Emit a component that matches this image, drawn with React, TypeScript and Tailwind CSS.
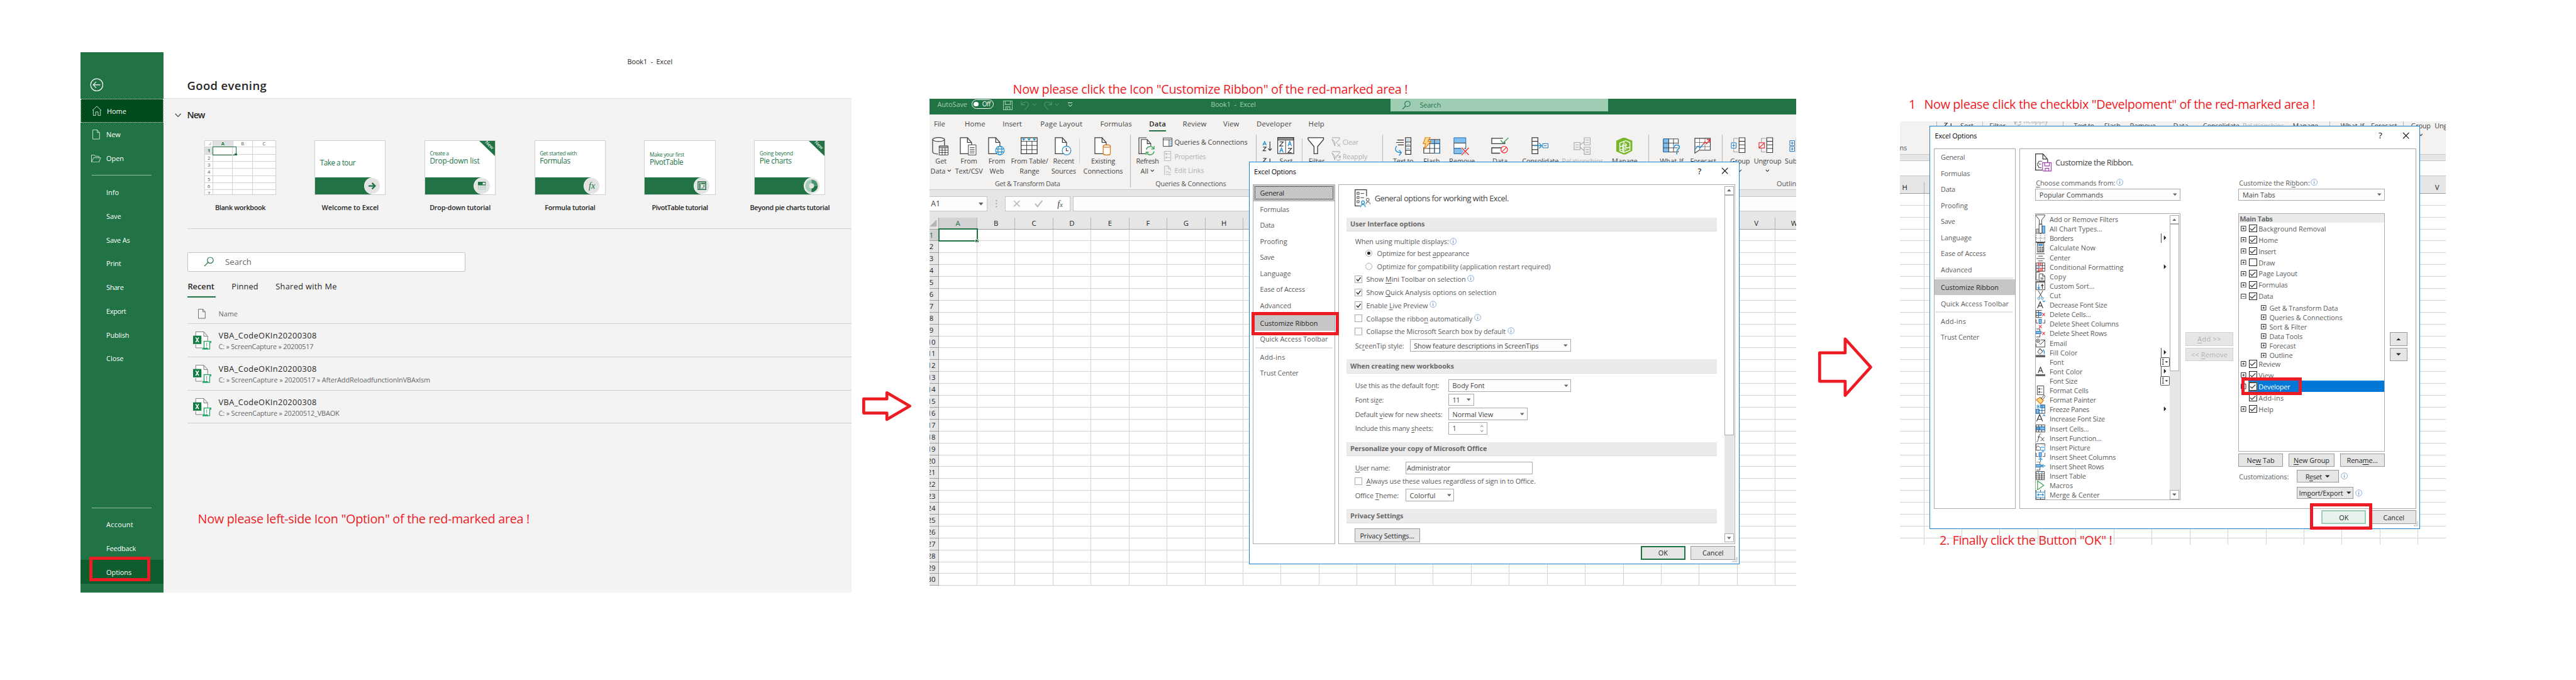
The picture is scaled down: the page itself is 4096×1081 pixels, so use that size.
import React, { useLayoutEffect, useRef, useState } from "react";

/* ---------- text ---------- */

/** Text run spread to the width `w`; "~" underlines the next letter. */
function T({ t, w, c = "" }: { t: string; w?: number; c?: string }) {
  const ref = useRef<HTMLSpanElement>(null);
  const [ls, setLs] = useState<number | undefined>(undefined);
  const plain = t.replace("~", "");
  useLayoutEffect(() => {
    if (w && ref.current && ls === undefined) {
      setLs((w - ref.current.offsetWidth) / plain.length);
    }
  }, [w, ls, plain]);
  const k = t.indexOf("~");
  return (
    <span
      ref={ref}
      className={"inline-block shrink-0 whitespace-pre " + c}
      style={ls === undefined ? undefined : { letterSpacing: ls + "px" }}
    >
      {k < 0 ? (
        t
      ) : (
        <>
          {t.slice(0, k)}
          <span className="underline underline-offset-2">{t[k + 1]}</span>
          {t.slice(k + 2)}
        </>
      )}
    </span>
  );
}

function Svg({ w, h, c = "", children }: { w: number; h: number; c?: string; children: React.ReactNode }) {
  return (
    <svg width={w} height={h} viewBox={`0 0 ${w} ${h}`} fill="none" className={"shrink-0 " + c}>
      {children}
    </svg>
  );
}

const K = "#3b3a39";
const B = "#1e8bcd";
const LB = "#83beec";
const R = "#e8383d";
const G = "#3fa158";
const O = "#e07b1a";

/* ---------- backstage ---------- */

const doc = (
  <Svg w={13} h={17}>
    <path d="M.5.5h7.5l4 4.5v11H.5zM8 .5V5h4" stroke="currentColor" />
  </Svg>
);

function SideItem({ t, w, icon, c = "" }: { t: string; w: number; icon?: React.ReactNode; c?: string }) {
  return (
    <div className={"flex h-[40px] items-center pt-[1px] " + c}>
      <div className="flex w-[43px] justify-center pl-[9px]">{icon}</div>
      <T t={t} w={w} />
    </div>
  );
}

function Ribbonlet() {
  return (
    <div className="absolute right-0 top-0 h-[26px] w-[27px]">
      <Svg w={27} h={26}>
        <path d="M0 0h27v26z" fill="#217346" />
      </Svg>
      <span className="absolute left-[9px] top-[1px] rotate-45 text-[8px] leading-[12px] text-white">New</span>
    </div>
  );
}

function Tile({ small, big, cap, w, isNew, badge, sw, bw }: any) {
  return (
    <div className="flex w-[185px] flex-col items-center">
      <div className="relative h-[92px] w-[120px] overflow-hidden border border-[#d0d0d0] bg-white text-[#217346]">
        <div className={"flex flex-col items-start pl-[8px] " + (small ? (big === "PivotTable" ? "pt-[18px]" : "pt-[16px]") : "pt-[30px]")}>
          {small && <T t={small} w={sw} c="text-[9px] leading-[11px]" />}
          <T t={big} w={bw} c="text-[12.500px] leading-[13px]" />
        </div>
        <div className="absolute bottom-0 left-0 h-[28px] w-[95px] bg-[#217346]" />
        <div className="absolute bottom-0 right-[8px] flex h-[28px] w-[28px] items-center justify-center rounded-full border-2 border-white bg-[#e3e3e3]">
          {badge}
        </div>
        {isNew && <Ribbonlet />}
      </div>
      <T t={cap} w={w} c="mt-[12px] font-semibold leading-[18px] text-[#262626]" />
    </div>
  );
}

function BlankTile() {
  return (
    <div className="flex w-[185px] flex-col items-center">
      <div className="h-[92px] w-[120px] overflow-hidden border border-[#d0d0d0] bg-white text-[8px] text-[#555]">
        <div className="flex h-[11px] leading-[10px]">
          <div className="flex w-[15px] items-end justify-end border-b border-r border-[#d4d4d4] p-[2px]">
            <Svg w={7} h={7}><path d="M7 0v7H0z" fill="#d4d4d4" /></Svg>
          </div>
          <div className="w-[38px] border-r border-[#d4d4d4] bg-[#e0e0e0] text-center font-bold text-[#217346]">A</div>
          <div className="w-[38px] border-b border-r border-[#d4d4d4] text-center">B</div>
          <div className="w-[38px] shrink-0 border-b border-[#d4d4d4] text-center">C</div>
        </div>
        {[1, 2, 3, 4, 5, 6, 7].map((n) => (
          <div key={n} className="flex h-[12px] leading-[12px]">
            <div className={"w-[15px] border-b border-r border-[#d4d4d4] text-center " + (n === 1 ? "bg-[#e0e0e0] font-bold text-[#217346]" : "")}>{n}</div>
            <div className="relative w-[38px] border-b border-r border-[#d4d4d4]">
              {n === 1 && (
                <div className="absolute -left-[1px] -top-[1px] h-[14px] w-[40px] border-[1.5px] border-[#217346]">
                  <div className="absolute -bottom-[2px] -right-[2px] h-[4px] w-[4px] bg-[#217346]" />
                </div>
              )}
            </div>
            <div className="w-[38px] border-b border-r border-[#d4d4d4]" />
            <div className="w-[38px] shrink-0 border-b border-[#d4d4d4]" />
          </div>
        ))}
      </div>
      <T t="Blank workbook" w={85} c="mt-[12px] font-semibold leading-[18px] text-[#262626]" />
    </div>
  );
}

function FileRow({ sub, w }: { sub: string; w: number }) {
  return (
    <div className="flex h-[56px] border-b border-[#d0d0d0] pl-[10px] pt-[13px]">
      <Svg w={31} h={31}>
        <path d="M4.500 8V.5h13.500l6.500 7.500v8M18 .5V8h6.500M4.500 22v5.500H15" stroke="#777" fill="#fff" />
        <rect x="0" y="7" width="14" height="14" fill="#107c41" />
        <path d="M4.500 10l5 8M9.500 10l-5 8" stroke="#fff" strokeWidth="1.700" />
        <path d="M18.500 28V16.500h11.500v2h-2V29.500H16.500v-1.500z" stroke="#21a366" strokeWidth="1.400" fill="#fff" />
        <path d="M16 27.500h9v2.500h-9z" fill="#21a366" />
        <path d="M23 19v6M23 26v1.500" stroke="#777" />
      </Svg>
      <div className="-mt-[2px] flex flex-col items-start pl-[12px]">
        <T t="VBA_CodeOKIn20200308" w={165} c="text-[13.500px] leading-[19px] text-[#262626]" />
        <T t={sub} w={w} c="text-[11.500px] leading-[17px] text-[#666]" />
      </div>
    </div>
  );
}

function Backstage() {
  return (
    <section className="mt-[88px] flex h-[909px] w-[1297px] bg-[#f3f3f3]">
      <aside className="flex w-[139px] flex-col bg-[#217346] text-white">
        <div className="h-[78px] pl-[15px] pt-[43px]">
          <Svg w={23} h={23}>
            <circle cx="11.500" cy="11.500" r="10.300" stroke="#fff" strokeWidth="1.300" />
            <path d="M17.500 11.500h-12M10.500 6.500l-5 5 5 5" stroke="#fff" strokeWidth="1.200" />
          </Svg>
        </div>
        <SideItem
          t="Home"
          w={33}
          c="border border-dotted border-white bg-[#004b1c]"
          icon={<Svg w={17} h={17}><path d="M1 8L8.500 1 16 8M2.500 7v9.500h4v-6h4v6h4V7" stroke="#cfe3d7" /></Svg>}
        />
        <SideItem t="New" w={24} icon={<span className="text-[#cfe3d7]">{doc}</span>} />
        <SideItem
          t="Open"
          w={29}
          icon={<Svg w={17} h={13}><path d="M.5 12V.5h5l1.500 2h6V5M.5 12.500L4 5h12l-3 7.500z" stroke="#cfe3d7" /></Svg>}
        />
        <div className="mx-[19px] mb-[8px] mt-[8px] h-[1px] w-[100px] bg-[#90b9a2]" />
        <SideItem t="Info" w={21} />
        <SideItem t="Save" w={25} />
        <SideItem t="Save As" w={40} />
        <SideItem t="Print" w={25} />
        <SideItem t="Share" w={29} />
        <SideItem t="Export" w={33} />
        <SideItem t="Publish" w={38} />
        <SideItem t="Close" w={29} />
        <div className="mb-[7px] ml-[19px] mt-auto h-[1px] w-[100px] bg-[#90b9a2]" />
        <SideItem t="Account" w={45} />
        <SideItem t="Feedback" w={50} />
        <SideItem t="Options" w={42} c="bg-[#0f5c2f]" />
        <div className="h-[15px]" />
      </aside>

      <main className="flex flex-1 flex-col text-[#262626]">
        <div className="h-[78px] border-b border-[#e1e1e1] bg-white">
          <div className="flex h-[30px] items-center pl-[781px]"><T t="Book1  -  Excel" w={76} /></div>
          <div className="-mt-[1px] flex h-[54px] items-center pl-[40px]">
            <T t="Good evening" w={134} c="text-[19.500px] font-semibold" />
          </div>
        </div>
        <div className="flex h-[70px] items-start pl-[19px] pt-[17px]">
          <Svg w={11} h={7} c="mt-[8px]"><path d="M.8.8l4.700 5 4.700-5" stroke="#444" strokeWidth="1.200" /></Svg>
          <T t="New" w={30} c="ml-[10px] text-[15px] font-semibold leading-[22px]" />
        </div>
        <div className="flex h-[148px] pl-[37px]">
          <BlankTile />
          <Tile big="Take a tour" bw={60} cap="Welcome to Excel" w={96}
            badge={<Svg w={14} h={14}><path d="M1 7h11M7 2l5 5-5 5" stroke="#217346" strokeWidth="2.500" /></Svg>} />
          <Tile small="Create a" sw={32} big="Drop-down list" bw={84} cap="Drop-down tutorial" w={103} isNew
            badge={<Svg w={13} h={13}><path d="M0 0h13v6H0z" fill="#217346" /><path d="M8 1.500h4v3H8z" fill="#fff" /><path d="M.5 6.500h12v6H.5zM2 9.500h9" stroke="#a9ccb8" /></Svg>} />
          <Tile small="Get started with" sw={62} big="Formulas" bw={51} cap="Formula tutorial" w={85}
            badge={<span className="font-['Liberation_Serif',serif] text-[15px] italic leading-none">fx</span>} />
          <Tile small="Make your first" sw={58} big="PivotTable" bw={57} cap="PivotTable tutorial" w={95}
            badge={<Svg w={15} h={15}><path d="M1 1h13v13H1z" stroke="#217346" strokeWidth="1.500" /><path d="M3 3h2v10H3zM6 3h7v2H6z" fill="#217346" /><path d="M7 12c3 0 4-2 4-4M9.500 8.500L11 7l1.500 1.500" stroke="#217346" /></Svg>} />
          <Tile small="Going beyond" sw={56} big="Pie charts" bw={54} cap="Beyond pie charts tutorial" w={134} isNew
            badge={<Svg w={22} h={22}><circle cx="11" cy="11" r="7.500" stroke="#a5cab5" strokeWidth="6" /><path d="M18.500 11a7.500 7.500 0 0 1-7.500 7.500" stroke="#217346" strokeWidth="6" /><path d="M11 3.500a7.500 7.500 0 0 1 7.500 7.500" stroke="#4f9470" strokeWidth="6" /></Svg>} />
        </div>
        <div className="ml-[40px] h-[1px] bg-[#d0d0d0]" />
        <div className="ml-[40px] mt-[40px] flex h-[32px] w-[468px] items-center rounded-[2px] border border-[#c3c3c3] bg-white pl-[27px]">
          <Svg w={17} h={17}><circle cx="11" cy="6" r="5" stroke="#217346" strokeWidth="1.200" /><path d="M7.500 9.500L1 16" stroke="#217346" strokeWidth="1.300" /></Svg>
          <T t="Search" w={44} c="ml-[19px] text-[14px] text-[#666]" />
        </div>
        <div className="ml-[40px] mt-[14px] flex h-[30px] items-start text-[13.500px]">
          <div className="h-[30px] w-[48px] border-b-[3px] border-[#217346] pt-[3px]"><T t="Recent" w={46} c="pl-[1px] font-semibold" /></div>
          <T t="Pinned" w={45} c="ml-[27px] pt-[3px]" />
          <T t="Shared with Me" w={103} c="ml-[29px] pt-[3px]" />
        </div>
        <div className="ml-[40px] flex h-[44px] items-center border-b border-[#d0d0d0] pl-[18px] pt-[11px] text-[#666]">
          {doc}
          <T t="Name" w={32} c="ml-[22px]" />
        </div>
        <div className="ml-[40px]">
          <FileRow sub="C: » ScreenCapture » 20200517" w={160} />
          <FileRow sub="C: » ScreenCapture » 20200517 » AfterAddReloadfunctionInVBAxlsm" w={356} />
          <FileRow sub="C: » ScreenCapture » 20200512_VBAOK" w={203} />
        </div>
      </main>
    </section>
  );
}

/* ---------- workbook window ---------- */

const page = <path d="M1 1h12l7 8v19H1zM13 1v8h7" stroke={K} strokeWidth="1.300" fill="#fff" />;

const chev = <Svg w={7} h={5}><path d="M.8.8l2.700 3 2.700-3" stroke={K} strokeWidth="1.200" /></Svg>;

const big: Record<string, React.ReactNode> = {
  get: (
    <>
      <path d="M1 4v21c0 2 5 3.500 9 3.500M21 4v10" stroke={K} strokeWidth="1.300" />
      <ellipse cx="11" cy="4" rx="10" ry="3.300" stroke={K} strokeWidth="1.300" fill="#fff" />
      <path d="M12 15h15v15H12z" fill="#fff" stroke={K} /><path d="M12 15h15v3H12z" fill="#bbb" stroke={K} />
      <path d="M12 22h15M12 26h15M17 18v12M22 18v12" stroke={K} />
    </>
  ),
  csv: <>{page}<path d="M14.500 13h13v17h-13z" fill="#fff" stroke={K} /><path d="M17 17.500h8M17 20.500h8M17 23.500h8M17 26.500h8" stroke={K} /></>,
  web: <>{page}<g stroke={B} strokeWidth="1.200"><circle cx="20" cy="22.500" r="7.300" fill="#f3f2f1" /><ellipse cx="20" cy="22.500" rx="3.300" ry="7.300" /><path d="M13 20h14M13 25h14" /></g></>,
  table: <><path d="M.7 1h27v27H.7z" fill="#fff" stroke={K} strokeWidth="1.300" /><path d="M.7 7h27M.7 14h27M.7 21h27M10 7v21M19 7v21" stroke={K} /><path d="M2 2.500h6l-3 3.500zM11 2.500h6l-3 3.500zM20 2.500h6l-3 3.500z" fill={B} /></>,
  recent: <>{page}<circle cx="20" cy="22.500" r="7.300" stroke={B} strokeWidth="1.300" fill="#fff" /><path d="M19.500 18v5h4" stroke={K} strokeWidth="1.200" /></>,
  exist: <>{page}<path d="M15 15v13c0 1 3 2 6 2s6-1 6-2V15" fill="#fff" stroke={O} strokeWidth="1.400" /><ellipse cx="21" cy="15" rx="6" ry="2" fill="#fff" stroke={O} strokeWidth="1.400" /></>,
  refresh: <><path d="M4 28H1V1h13" stroke={K} strokeWidth="1.200" /><path d="M12 28H5V4h10l6 7v4M15 4v7h6" fill="#fff" stroke={K} strokeWidth="1.200" /><circle cx="20" cy="22.500" r="8" fill="#f3f2f1" /><path d="M13.500 21a6.500 6.500 0 0 1 12-2M26.500 24a6.500 6.500 0 0 1-12 2.500M26.500 15v5h-5M13 30v-4.500h4.500" stroke={G} strokeWidth="1.500" /></>,
  sort: <><path d="M.7.700h27v27H.7z" fill="#fff" stroke={K} strokeWidth="1.300" /><path d="M1 1h26v4H1z" fill="#999" stroke={K} /><path d="M14 5v22" stroke={K} /><path d="M4 8h6l-6 7h6M18 19h6l-6 7h6" stroke={K} strokeWidth="1.300" /><path d="M4 26l3-8 3 8M5 23h4M18 15l3-8 3 8M19 12h4" stroke={B} strokeWidth="1.300" /></>,
  filter: <path d="M1 1h26v3L17 16v12h-6V16L1 4z" fill="#fff" stroke={K} strokeWidth="1.400" />,
  textto: <><path d="M19 1h9v28h-9zM19 8h9M19 15h9M19 22h9" fill="#fff" stroke={K} strokeWidth="1.300" /><path d="M21 5h5M21 12h5M21 19h5" stroke={B} /><path d="M5 5h11M3 9h13M6 13h10" stroke={K} strokeWidth="1.300" /><path d="M4 15c-4 5-2 11 7 11M8 22l4 4-4 5" stroke={B} strokeWidth="1.400" /></>,
  flash: <><path d="M7 4h22v23H2V17" fill="#fff" stroke={K} strokeWidth="1.300" /><path d="M12 5h17v6H12z" fill={LB} /><path d="M8 11h21M2 19h27M12 11v16M20 4v23" stroke={K} /><path d="M20 11h9v16h-9z" stroke="#1567b0" /><path d="M5 0h8l-4 7h5L3 20l2-9H1z" fill="#fbd88a" stroke={O} strokeWidth="1.300" /></>,
  remove: <><path d="M2 1h20v9H2z" fill={LB} stroke="#1567b0" /><path d="M2 10h20v9H2z" fill="#fff" stroke={K} /><path d="M2 19h20v9H2z" fill={LB} stroke="#1567b0" /><path d="M15 17l12 14M27 17L15 31" stroke="#f3f2f1" strokeWidth="4" /><path d="M15 18l12 12M27 18L15 30" stroke={R} strokeWidth="1.500" /></>,
  datav: <><path d="M20 2H1v9h22V8M20 18H1v9h14" stroke={K} strokeWidth="1.400" fill="#fff" /><path d="M16 5l4 5 9-9" stroke={G} strokeWidth="1.500" /><circle cx="22" cy="21" r="5.500" stroke={R} strokeWidth="1.400" fill="#fff" /><path d="M18 25l8-8" stroke={R} strokeWidth="1.400" /></>,
  consol: <><path d="M1 1h10v27H1zM1 7h10M1 14h10M1 21h10" fill="#fff" stroke={K} strokeWidth="1.300" /><path d="M4 14.500h13M13 10l4.500 4.500L13 19" stroke={B} strokeWidth="1.400" /><path d="M19 11h9v7h-9zM21 14.500h5" fill="#fff" stroke="#1567b0" /></>,
  rel: <g stroke="#aaa" strokeWidth="1.200"><path d="M1 9h10v12H1zM3 13h6M3 17h6M18 1h10v12H18zM20 5h6M20 9h6M18 17h10v12H18zM20 21h6M20 25h6M11 13l7-5M11 17l7 6" /></g>,
  manage: <><path d="M1 6l11-5h4l12 5v17l-11 6h-4L1 24z" fill="#76b82a" /><path d="M7 10l10-4 7 3v13l-10 4-7-3zM12 12v12M17 10v12M7 16l12-3M7 21l17-4M14 8v17" stroke="#fff" strokeWidth="1.500" /></>,
  whatif: <><path d="M1 3h25v22H1z" fill="#fff" stroke={K} /><path d="M1 3h9v22H1z" fill={LB} stroke="#1567b0" /><path d="M1 10h25M1 18h25M10 3v22M18 3v22" stroke={K} /><path d="M19 17c0-5 9-5 9 0 0 3-4.500 3-4.500 7" stroke="#f3f2f1" strokeWidth="4" /><path d="M19 17c0-5 9-5 9 0 0 3-4.500 3-4.500 7M23.500 26v3" stroke={B} strokeWidth="1.600" /></>,
  forecast: <><path d="M1 2h26v20H8l-7 5z" fill="#fff" stroke={K} strokeWidth="1.200" /><path d="M1 9h26M1 16h26M9 2v20M18 2v20" stroke="#777" /><path d="M1 21l5-6 4 3 4-5" stroke={B} strokeWidth="1.500" /><path d="M14 13l4-5 3 3 5-7M26 9V4h-5" stroke={R} strokeWidth="1.500" /></>,
  group: <><path d="M14 1h10v25H14zM14 7h10M14 13h10M14 19h10" fill="#fff" stroke={K} strokeWidth="1.200" /><path d="M12 2H5v7M12 25H5v-6" stroke="#999" /><path d="M1 9.500h8v9H1zM5 11v6M2.500 14h5" stroke="#1567b0" fill="#fff" /></>,
  ungroup: <><path d="M14 1h10v25H14zM14 7h10M14 13h10M14 19h10" fill="#fff" stroke={K} strokeWidth="1.200" /><path d="M12 2H5v7M12 25H5v-6" stroke="#999" /><path d="M1 9.500h9v9H1zM1 18l9-8" stroke={R} fill="#fff" strokeWidth="1.300" /></>,
  subtotal: <><path d="M12 1h12v25H12z" fill="#fff" stroke={K} /><path d="M1 6h8v8H1zM5 7.500v5M2.500 10h5M1 16h8v8H1zM5 17.500v5M2.500 20h5" stroke="#1567b0" fill="#fff" /></>,
};

function Big({ i, a, b, aw, bw, w, d, dim }: { i: string; a: string; b?: string; aw?: number; bw?: number; w: string; d?: boolean; dim?: boolean }) {
  return (
    <div className={"flex shrink-0 flex-col items-center " + w + (dim ? " text-[#b1b1b1]" : "")}>
      <Svg w={30} h={32}>{big[i]}</Svg>
      <T t={a} w={aw} c="leading-[16px]" />
      <div className="flex h-[16px] items-center gap-[3px]">
        {b && <T t={b} w={bw} c="leading-[16px]" />}
        {d && chev}
      </div>
    </div>
  );
}

function Group({ w, label, lw, children, c = "" }: { w: string; label: string; lw?: number; children: React.ReactNode; c?: string }) {
  return (
    <div className={"flex h-[89px] shrink-0 flex-col border-r border-[#b8b6b4] " + w}>
      <div className={"flex h-[74px] pt-[4px] " + c}>{children}</div>
      <div className="flex h-[15px] items-center justify-center pr-[8px] text-[#555]"><T t={label} w={lw} /></div>
    </div>
  );
}

function Small({ t, w, dim, icon }: { t: string; w: number; dim?: boolean; icon: React.ReactNode }) {
  return (
    <div className={"flex h-[24px] items-center gap-[3px] " + (dim ? "text-[#b1b1b1]" : "")}>
      <Svg w={16} h={17}>{icon}</Svg>
      <T t={t} w={w} />
    </div>
  );
}

const TABS: [string, number, string][] = [
  ["File", 19, "ml-[7px]"], ["Home", 35, "ml-[33px]"], ["Insert", 32, "ml-[29px]"], ["Page Layout", 71, "ml-[31px]"],
  ["Formulas", 53, "ml-[30px]"], ["Data", 28, "ml-[29px]"], ["Review", 40, "ml-[28px]"], ["View", 27, "ml-[28px]"],
  ["Developer", 59, "ml-[29px]"], ["Help", 27, "ml-[28px]"],
];

const COLS = "ABCDEFGHIJKLMNOPQRSTUVW".split("");

function Workbook() {
  return (
    <div className="w-[1459px] shrink-0 overflow-hidden bg-white text-[#444]">
      {/* title bar */}
      <div className="flex h-[27px] items-start bg-[#217346] pl-[13px] text-[#a0cdb4]">
        <T t="AutoSave" w={50} c="leading-[20px]" />
        <div className="ml-[7px] mt-[1px] flex h-[16px] w-[38px] items-center rounded-full border border-white text-[10.500px] text-white">
          <div className="ml-[3px] h-[8px] w-[8px] rounded-full bg-white" />
          <T t="Off" w={14} c="ml-[6px]" />
        </div>
        <Svg w={16} h={16} c="ml-[15px] mt-[3px]"><path d="M.5.5h15v15H.5zM3.500.5v6h9v-6M4.500 15.500v-5h7v5M7.500 15v-3" stroke="#a0cdb4" strokeWidth="1.200" /></Svg>
        <Svg w={27} h={16} c="ml-[14px] mt-[3px]"><path d="M1 1v6h6M1.500 6.500C5 1 13 1 13 6.500c0 3-3 5-6 9M20 5l3 3 3-3" stroke="#4f9470" strokeWidth="1.200" /></Svg>
        <Svg w={27} h={16} c="ml-[11px] mt-[3px]"><path d="M14 1v6H8M13.500 6.500C10 1 2 1 2 6.500c0 3 3 5 6 9M20 5l3 3 3-3" stroke="#4f9470" strokeWidth="1.200" /></Svg>
        <Svg w={8} h={8} c="ml-[14px] mt-[7px]"><path d="M0 .5h8M1 3.500l3 3 3-3" stroke="#fff" /></Svg>
        <T t="Book1  -  Excel" w={76} c="ml-[233px] leading-[18px]" />
        <div className="ml-[227px] flex h-[21px] w-[366px] items-center bg-[#9fcdb3] pl-[19px] text-[#217346]">
          <Svg w={15} h={15}><circle cx="9.500" cy="5.500" r="4.500" stroke="#217346" strokeWidth="1.200" /><path d="M6.500 9L1 14.500" stroke="#217346" strokeWidth="1.200" /></Svg>
          <T t="Search" w={35} c="ml-[15px]" />
        </div>
      </div>
      {/* tab strip */}
      <div className="flex h-[34px] items-start bg-[#f3f2f1] pt-[6px] text-[12px]">
        {TABS.map(([t, w, ml]) => (
          <div key={t} className={ml + " h-[22px] " + (t === "Data" ? "border-b-[3px] border-[#217346] font-semibold text-[#262626]" : "")}>
            <T t={t} w={w} c="leading-[19px]" />
          </div>
        ))}
      </div>
      {/* ribbon */}
      <div className="flex h-[93px] border-b border-[#c8c8c8] bg-[#f3f2f1]">
        <Group w="w-[338px]" label="Get & Transform Data" lw={110} c="pr-[5px]">
          <Big i="get" a="Get" b="Data" w="w-[38px]" d />
          <Big i="csv" a="From" b="Text/CSV" bw={47} w="w-[56px]" />
          <Big i="web" a="From" b="Web" w="w-[38px]" />
          <Big i="table" a="From Table/" aw={63} b="Range" bw={33} w="w-[72px]" />
          <Big i="recent" a="Recent" aw={36} b="Sources" bw={41} w="w-[43px]" />
          <div className="ml-[5px] mt-[2px] h-[42px] w-[1px] shrink-0 bg-[#d2d0ce]" />
          <Big i="exist" a="Existing" aw={40} b="Connections" bw={67} w="w-[78px]" />
        </Group>
        <Group w="w-[212px]" label="Queries & Connections" lw={119}>
          <div className="pl-[2px]"><Big i="refresh" a="Refresh" aw={38} b="All" w="w-[53px]" d /></div>
          <div>
            <div className="-mt-[4px]" />
            <Small t="Queries & Connections" w={123} icon={<><path d="M.5 1.500h15v14H.5z" fill="#fff" stroke={K} /><path d="M.5 4.500h15M10.500 4v12" stroke={K} /><path d="M12 7.500h3M12 10.500h3M12 13.500h3" stroke={B} /></>} />
            <Small t="Properties" w={53} dim icon={<path d="M2.500.5h11v16h-11zM5 4h2v2H5zM5 10h2v2H5zM9 5h3M9 11h3" stroke="#b1b1b1" />} />
            <Small t="Edit Links" w={50} dim icon={<path d="M3 16V1h6l4 4.500V9M9 1v4.500h4M6 12a2 2 0 1 1 4 0M9 14a2 2 0 1 0 4 0M10 12h3M5 15h4" stroke="#b1b1b1" />} />
          </div>
        </Group>
        <Group w="w-[213px]" label="Sort & Filter" c="pl-[10px]">
          <div className="flex w-[16px] shrink-0 flex-col gap-[11px] pt-[6px]">
            <Svg w={18} h={18}><path d="M1 7.500L4 1l3 6.500M2 5.500h4" stroke={B} strokeWidth="1.300" /><path d="M1.500 10.500h5l-5 6h5M13 1v15M10 13l3 3 3-3" stroke={K} strokeWidth="1.300" /></Svg>
            <Svg w={18} h={18}><path d="M1.500.8h5l-5 6h5M13 1v15" stroke={K} strokeWidth="1.300" /></Svg>
          </div>
          <Big i="sort" a="Sort" w="w-[48px]" />
          <div className="ml-[2px] mt-[2px] h-[60px] w-[1px] shrink-0 bg-[#c4c2c0]" />
          <Big i="filter" a="Filter" w="w-[49px]" />
          <div>
            <div className="-mt-[4px]" />
            <Small t="Clear" w={27} dim icon={<path d="M1 1h13v2L9 8.500v2M6 15V8.500L1 3zM10 11l5 5M15 11l-5 5" stroke="#a0a0a0" />} />
            <Small t="Reapply" w={42} dim icon={<path d="M1 1h13v2L9 8.500M6 15V8.500L1 3zM8 12a3.500 3.500 0 0 1 7-1M15 13a3.500 3.500 0 0 1-6 2M15 8v3h-3" stroke="#a0a0a0" />} />
          </div>
        </Group>
        <Group w="w-[448px]" label="Data Tools" c="pl-[10px]">
          <Big i="textto" a="Text to" aw={34} b="Columns" bw={46} w="w-[48px]" />
          <Big i="flash" a="Flash" b="Fill" w="w-[48px]" />
          <Big i="remove" a="Remove" aw={43} b="Duplicates" bw={53} w="w-[54px]" />
          <Big i="datav" a="Data" b="Validation" w="w-[74px]" d />
          <Big i="consol" a="Consolidate" aw={61} w="w-[62px]" />
          <Big i="rel" a="Relationships" aw={70} w="w-[80px]" dim />
          <Big i="manage" a="Manage" aw={43} b="Data Model" w="w-[62px]" />
        </Group>
        <Group w="w-[124px]" label="Forecast" c="pl-[12px]">
          <Big i="whatif" a="What-If" aw={40} b="Analysis" w="w-[52px]" />
          <Big i="forecast" a="Forecast" aw={43} b="Sheet" w="w-[54px]" />
        </Group>
        <Group w="w-[230px]" label="Outline" c="pl-[7px]">
          <Big i="group" a="Group" aw={33} w="w-[44px]" d />
          <Big i="ungroup" a="Ungroup" aw={46} w="w-[49px]" d />
          <Big i="subtotal" a="Subtotal" w="w-[54px]" />
        </Group>
      </div>
      {/* formula bar */}
      <div className="flex h-[46px] bg-[#e6e6e6] pt-[10px]">
        <div className="flex h-[26px] w-[97px] items-center justify-between border border-l-0 border-[#c6c6c6] bg-[#fdfdfd] pl-[2px] pr-[6px]">
          <T t="A1" w={16} c="text-[13px]" />
          <Svg w={8} h={5}><path d="M0 0h8L4 5z" fill="#666" /></Svg>
        </div>
        <Svg w={3} h={14} c="ml-[14px] mt-[6px]"><path d="M1.500 1v2M1.500 6v2M1.500 11v2" stroke="#999" strokeWidth="2" /></Svg>
        <div className="ml-[13px] flex h-[26px] w-[110px] items-center justify-between border border-[#c6c6c6] bg-[#fdfdfd] px-[12px]">
          <Svg w={12} h={12}><path d="M1 1l10 10M11 1L1 11" stroke="#b8b8b8" strokeWidth="1.600" /></Svg>
          <Svg w={14} h={12}><path d="M1 6l4 5 8-10" stroke="#b8b8b8" strokeWidth="2" /></Svg>
          <span className="font-['Liberation_Serif',serif] text-[15px] italic leading-none text-[#444]">f<span className="text-[11px]">x</span></span>
        </div>
        <div className="ml-[4px] h-[26px] flex-1 border-y border-l border-[#c6c6c6] bg-[#fdfdfd]" />
      </div>
      {/* sheet */}
      <div className="flex h-[20px] bg-[#e6e6e6] text-[12px] text-[#222]">
        <div className="flex w-[16px] shrink-0 items-end justify-end border-b border-r border-[#9f9f9f] pb-[3px] pr-[3px]">
          <Svg w={12} h={12}><path d="M12 0v12H0z" fill="#b4b4b4" /></Svg>
        </div>
        {COLS.map((c) => (
          <div key={c} className={"w-[64px] shrink-0 border-b border-r border-b-[#9f9f9f] border-r-[#b4b4b4] text-center leading-[20px] " + (c === "A" ? "bg-[#d2d2d2] text-[#217346]" : "")}>{c}</div>
        ))}
      </div>
      {Array.from({ length: 30 }, (_, r) => (
        <div key={r} className="flex h-[20px]">
          <div className={"flex w-[16px] shrink-0 justify-center overflow-hidden border-b border-r border-[#9f9f9f] text-[12px] leading-[20px] " + (r === 0 ? "bg-[#d2d2d2] text-[#217346]" : "bg-[#e6e6e6] text-[#222]")}>
            <span className="-ml-[9px]">{r + 1}</span>
          </div>
          {COLS.map((c) => (
            <div key={c} className="relative w-[64px] shrink-0 border-b border-r border-[#d4d4d4]">
              {r === 0 && c === "A" && (
                <div className="absolute -left-[2px] -top-[2px] h-[23px] w-[67px] border-[2.200px] border-[#217346]">
                  <div className="absolute -bottom-[3px] -right-[3px] h-[6px] w-[6px] border-l border-t border-white bg-[#217346]" />
                </div>
              )}
            </div>
          ))}
        </div>
      ))}
    </div>
  );
}

/* ---------- options dialog ---------- */

const NAV: [string, number][] = [
  ["General", 40], ["Formulas", 49], ["Data", 24], ["Proofing", 46], ["Save", 24], ["Language", 52],
  ["Ease of Access", 75.5], ["Advanced", 52], ["Customize Ribbon", 97], ["Quick Access Toolbar", 114], ["Add-ins", 42], ["Trust Center", 65],
];

function Dialog({ sel, children, pos, hotOk }: { sel: string[]; children: React.ReactNode; pos: string; hotOk?: boolean }) {
  return (
    <div className={"absolute flex h-[678px] w-[826px] flex-col border border-[#1883d7] bg-white text-[#5c5c5c] " + pos}>
      <div className="mb-[7px] flex h-[30px] items-center pl-[8px] pr-[17px] text-black">
        <T t="Excel Options" w={71} />
        <span className="ml-auto mr-[34px] text-[14px]">?</span>
        <Svg w={12} h={12}><path d="M1 1l10 10M11 1L1 11" stroke="#000" strokeWidth="1.200" /></Svg>
      </div>
      <div className="flex h-[606px] pl-[6px]">
        <div className="w-[138px] shrink-0 border border-[#ababab]">
          {NAV.map(([t, w], i) => (
            <React.Fragment key={t}>
              {(i === 8 || i === 10) && <div className="mx-[3px] mb-[1px] h-[2px] bg-[#e3e3e6]" />}
              <div
                className={
                  "flex h-[27px] items-center pl-[11px] " +
                  (sel.includes(t) ? "bg-[#c6c6c6] text-[#262626] " : "") +
                  (sel.includes(t) && t === "General" ? "relative outline-2 -outline-offset-1 outline-[#ababab]" : "")
                }
              >
                <T t={t} w={w} />
                {sel.includes(t) && t === "General" && <div className="absolute inset-[2px] border border-dotted border-black" />}
              </div>
            </React.Fragment>
          ))}
        </div>
        <div className="relative ml-[6px] w-[668px] shrink-0 border border-[#ababab]">{children}</div>
      </div>
      <div className="mt-[3px] flex h-[23px] pl-[659px] text-[#262626]">
        <div className={"flex w-[75px] items-center justify-center border-[2.200px] " + (hotOk ? "border-[#9fcdb3] bg-[#e9f3ed]" : "border-[#217346] bg-[#e6e6e6]")}><T t="OK" w={16} /></div>
        <div className="ml-[9px] flex w-[75px] items-center justify-center border border-[#999] bg-[#e6e6e6]"><T t="Cancel" w={36} /></div>
      </div>
      <Svg w={8} h={8} c="absolute bottom-[3px] right-[2px]"><path d="M6 0h2v2H6zM3 3h2v2H3zM6 3h2v2H6zM0 6h2v2H0zM3 6h2v2H3zM6 6h2v2H6z" fill="#b4b4b4" /></Svg>
    </div>
  );
}

function Info({ c = "" }: { c?: string }) {
  return (
    <Svg w={12} h={12} c={c}>
      <circle cx="6" cy="6" r="5.200" stroke="#7da7d9" />
      <path d="M6 5v4M6 2.800v1.200" stroke="#5f87bd" strokeWidth="1.100" />
    </Svg>
  );
}

function Combo({ t, tw, w, pl = "pl-[6px]" }: { t: string; tw: number; w: string; pl?: string }) {
  return (
    <div className={"flex h-[21px] shrink-0 items-center justify-between border border-[#ababab] bg-[#fdfdfd] pr-[4px] text-[#444] " + pl + " " + w}>
      <T t={t} w={tw} />
      <Svg w={7} h={5}><path d="M0 .5h7L3.500 4.500z" fill="#666" /></Svg>
    </div>
  );
}

function Section({ t, w, c = "" }: { t: string; w: number; c?: string }) {
  return (
    <div className={"flex h-[24px] w-[623px] items-center border-b border-[#dcdcdc] bg-[#ebebeb] pb-[2px] pl-[6px] font-bold text-[#6a6a6a] " + c}>
      <T t={t} w={w} />
    </div>
  );
}

function Check({ t, w, on, info, h = "h-[22px]" }: { t: string; w: number; on?: boolean; info?: boolean; h?: string }) {
  return (
    <div className={"flex items-center pl-[13px] " + h}>
      <div className="flex h-[13px] w-[13px] items-center justify-center border border-[#ababab] bg-white">
        {on && <Svg w={9} h={8}><path d="M1 4l2.500 3L8 1" stroke="#262626" strokeWidth="1.400" /></Svg>}
      </div>
      <T t={t} w={w} c="ml-[7px]" />
      {info && <Info c="-mt-[3px] ml-[3px]" />}
    </div>
  );
}

function Radio({ t, w, on }: { t: string; w: number; on?: boolean }) {
  return (
    <div className="flex h-[22px] items-center pl-[31px]">
      <div className="flex h-[12px] w-[12px] items-center justify-center rounded-full border border-[#ababab]">
        {on && <div className="h-[6px] w-[6px] rounded-full bg-[#222]" />}
      </div>
      <T t={t} w={w} c="ml-[8px]" />
    </div>
  );
}

function Scroll({ thumb, c }: { thumb: string; c: string }) {
  return (
    <div className={"absolute right-[1px] flex w-[16px] flex-col bg-[#e6e6e6] " + c}>
      <div className="flex h-[15px] shrink-0 items-center justify-center border border-[#ababab] bg-white"><Svg w={7} h={5}><path d="M0 4.500h7L3.500.5z" fill="#666" /></Svg></div>
      <div className={"shrink-0 border border-[#ababab] bg-white " + thumb} />
      <div className="mt-auto flex h-[15px] items-center justify-center border border-[#ababab] bg-white"><Svg w={7} h={5}><path d="M0 .5h7L3.500 4.500z" fill="#666" /></Svg></div>
    </div>
  );
}

function General() {
  return (
    <div className="h-full overflow-hidden pl-[13px]">
      <div className="mb-[9px] flex h-[46px] items-center pl-[13px]">
        <Svg w={28} h={30}>
          <path d="M20 12V.700H.7V28H9" stroke={K} strokeWidth="1.300" fill="#fff" />
          <path d="M4 5h3.500v3.500H4zM4 12h3.500v3.500H4zM4 19h3.500v3.500H4zM10 7h6M10 14h6" stroke={K} />
          <circle cx="22" cy="17.500" r="2.500" stroke={K} /><path d="M19 25c0-5 7-5 7 0" stroke={K} />
          <circle cx="14" cy="22" r="2.500" stroke={B} strokeWidth="1.300" /><path d="M10 30c0-6 8-6 8 0" stroke={B} strokeWidth="1.300" />
        </Svg>
        <T t="General options for working with Excel." w={226} c="ml-[6px] text-[13.500px] text-[#444]" />
      </div>
      <Section t="User Interface options" w={125} />
      <div className="mt-[6px] flex h-[19px] items-center pl-[14px] pt-[2px]"><T t="When using multiple displays:" w={158} /><Info c="ml-[1px]" /></div>
      <Radio t="Optimize for best ~appearance" w={155} on />
      <Radio t="Optimize for ~compatibility (application restart required)" w={292} />
      <Check t="Show ~Mini Toolbar on selection" w={167} on info />
      <Check t="Show ~Quick Analysis options on selection" w={219} on />
      <Check t="Enable ~Live Preview" w={103} on info />
      <Check t="Collapse the ribbo~n automatically" w={178} info />
      <Check t="Collapse the Microsoft Search box by default" w={235} info />
      <div className="mt-[2px] flex h-[21px] items-center pl-[14px]">
        <div className="w-[92px]"><T t="Sc~reenTip style:" w={82} /></div>
        <Combo t="Show feature descriptions in ScreenTips" tw={210} w="w-[271px]" />
      </div>
      <Section t="When creating new workbooks" w={174} c="mt-[13px]" />
      <div className="mt-[8px] flex h-[24px] items-center pl-[14px]"><div className="w-[157px]"><T t="Use this as the default fo~nt:" w={142} /></div><Combo t="Body Font" tw={54} w="w-[207px]" /></div>
      <div className="flex h-[24px] items-center pl-[14px]"><div className="w-[157px]"><T t="Font si~ze:" w={48} /></div><Combo t="11" tw={12} w="w-[43px]" /></div>
      <div className="flex h-[24px] items-center pl-[14px]"><div className="w-[157px]"><T t="Default ~view for new sheets:" w={147} /></div><Combo t="Normal View" tw={68} w="w-[133px]" /></div>
      <div className="flex h-[24px] items-center pl-[14px]">
        <div className="w-[157px]"><T t="Include this many ~sheets:" w={132} /></div>
        <div className="flex h-[21px] w-[66px] items-center justify-between border border-[#ababab] pl-[6px] pr-[5px] text-[#444]">
          <T t="1" /><Svg w={7} h={13}><path d="M1.500 4l2-2.500 2 2.500M1.500 9.500l2 2.500 2-2.500" stroke="#666" /></Svg>
        </div>
      </div>
      <Section t="Personalize your copy of Microsoft Office" w={230} c="mt-[11px]" />
      <div className="mt-[9px] flex h-[21px] items-center pl-[14px]">
        <div className="w-[85px]"><T t="~User name:" w={59} /></div>
        <div className="flex h-[21px] w-[214px] items-center border border-[#ababab] pl-[1px] text-[#444]"><T t="Administrator" w={73} /></div>
      </div>
      <Check t="~Always use these values regardless of sign in to Office." w={285} h="h-[24px]" />
      <div className="mt-[1px] flex h-[21px] items-center pl-[14px]"><div className="w-[85px]"><T t="Office ~Theme:" w={74} /></div><Combo t="Colorful" tw={43} w="w-[82px]" /></div>
      <Section t="Privacy Settings" w={89} c="mt-[13px]" />
      <div className="ml-[13px] mt-[9px] flex h-[23px] w-[110px] items-center justify-center border border-[#999] bg-[#e6e6e6] text-[#262626]"><T t="Privacy Settings..." w={92} /></div>
      <Scroll thumb="h-[405px]" c="top-[2px] h-[600px]" />
    </div>
  );
}

const X16 = <path d="M11 6l4.500 5M15.500 6L11 11" stroke={R} strokeWidth="1.200" />;
const LIST: { t: string; w: number; i?: React.ReactNode; m?: "split" | "menu" | "edit" }[] = [
  { t: "Add or Remove Filters", w: 116, i: <path d="M.5.700h15v1.500L10 9v7H6V9L.5 2.200z" stroke={K} fill="#fff" /> },
  { t: "All Chart Types...", w: 89, i: <><path d="M.5 8.500h5v7h-5z" fill="#c8c6c4" stroke="#777" /><path d="M10.500 3.500h5v12h-5z" fill={LB} stroke="#1567b0" /><path d="M5.500.5h5v15h-5z" fill="#fff" stroke={K} /></> },
  { t: "Borders", w: 40, m: "split", i: <><path d="M.5.5h15v14M.5.5v14M8 0v14M0 8h16" stroke={K} strokeDasharray="1 2" /><path d="M0 15h16" stroke="#000" strokeWidth="1.300" /></> },
  { t: "Calculate Now", w: 77, i: <><path d="M2.500.5h11v15h-11z" fill="#fff" stroke={K} /><path d="M4.500 2.500h7v2h-7z" fill={LB} stroke="#1567b0" /><path d="M4.500 7.500h8M4.500 10.500h8M4.500 13.500h8" stroke={K} strokeWidth="2" strokeDasharray="2 1" /></> },
  { t: "Center", w: 35, i: <path d="M1 1.500h14M4 5.500h8M1 9.500h14M4 13.500h8" stroke={K} /> },
  { t: "Conditional Formatting", w: 124, m: "menu", i: <><path d="M.5 1h15v14H.5zM.5 5.500h15M.5 10h15M4.500 1v14M11 1v14" stroke={K} fill="#fff" /><path d="M4.500 1h4v4.500h-4zM4.500 10h7v4.500h-7z" fill="#f29a9c" stroke={R} /><path d="M4 6h3v4H4z" fill={LB} /></> },
  { t: "Copy", w: 28, i: <path d="M4 14H.5V.5H7M5.500 3.500h6l4 4v8h-10zM11.500 3.500v4h4M8 10.500h5M8 12.500h5" stroke={K} /> },
  { t: "Custom Sort...", w: 75, i: <><path d="M.5.5h15v14H.5z" fill="#fff" stroke={K} /><path d="M1 1h14v2H1z" fill="#999" /><path d="M5 5v8M3 10.500L5 13l2-2.500" stroke={B} strokeWidth="1.200" /><path d="M11 13V6M9 8l2-2.500L13 8" stroke={K} strokeWidth="1.200" /></> },
  { t: "Cut", w: 19, i: <><path d="M4 0l6.500 11M12 0L5.500 11" stroke={K} /><circle cx="5" cy="13" r="1.800" stroke={B} /><circle cx="11" cy="13" r="1.800" stroke={B} /></> },
  { t: "Decrease Font Size", w: 97, i: <><path d="M3 13.500L7.500 3 12 13.500M4.500 10h6" stroke={K} strokeWidth="1.300" /><path d="M11.500 1l2 2 2-2" stroke={B} strokeWidth="1.200" /></> },
  { t: "Delete Cells...", w: 70, i: <><path d="M10 1.500H.5v12H10M.5 5h9M.5 10h9M4.500 1.500v12" stroke={K} /><path d="M4.500 5h5v5h-5z" fill={LB} stroke="#1567b0" />{X16}</> },
  { t: "Delete Sheet Columns", w: 116, i: <><path d="M.5 1v6H4M15.500 1v6H12" stroke={K} /><path d="M5.500 0h4v8h-4z" fill={LB} stroke="#1567b0" /><path d="M5.500 10.500l4.500 5M10 10.500l-4.500 5" stroke={R} strokeWidth="1.200" /></> },
  { t: "Delete Sheet Rows", w: 96, i: <><path d="M1 1h6v4M1 14.500h6V10" stroke={K} /><path d="M0 5h9v4H0z" fill={LB} stroke="#1567b0" />{X16}</> },
  { t: "Email", w: 29, i: <><path d="M8 2.500h7.500v12H.5V9M15 3L8 10 6 8.500" stroke={K} /><circle cx="3.500" cy="4" r="3" stroke={K} /><circle cx="3.500" cy="4" r="1" stroke={K} /></> },
  { t: "Fill Color", w: 47, m: "split", i: <><path d="M0 12h16v4H0z" fill="#666" /><path d="M7 1L3 7l4 3.500L12 6zM6 1l5 5" stroke={K} fill="#fff" /><path d="M12 3c2 1 3 4 2 7" stroke={B} strokeWidth="1.500" /></> },
  { t: "Font", w: 24, m: "edit" },
  { t: "Font Color", w: 56, m: "split", i: <><path d="M0 12.500h16V16H0z" fill="#666" /><path d="M4 10.500L8 .5l4 10M5.500 7h5" stroke={K} strokeWidth="1.200" /></> },
  { t: "Font Size", w: 47, m: "edit" },
  { t: "Format Cells", w: 66, i: <path d="M2.500.5h11v15h-11zM5 4.500h2v2H5zM5 10h2v2H5zM9 5.500h2M9 11h2" stroke={K} /> },
  { t: "Format Painter", w: 78, i: <><path d="M1 8l6-4 6 5-5 6z" fill="#fbd88a" stroke={O} strokeWidth="1.300" /><path d="M8 4l3 3M10 5l4-5 2 2-4 5" stroke={K} fill="#fff" /></> },
  { t: "Freeze Panes", w: 67, m: "menu", i: <><path d="M.5 1h15v14H.5z" fill="#fff" stroke={K} /><path d="M8 1h7.500v4.500H8zM.5 8h5v7h-5z" fill={LB} stroke="#1567b0" /><path d="M5.500 5.500v9M10.500 1v14M5 10h11" stroke="#1567b0" /><path d="M0 0h7.500v7.500H0z" fill="#fff" /><path d="M4 0v7M1 1.500l6 4M7 1.500l-6 4" stroke={B} /></> },
  { t: "Increase Font Size", w: 93, i: <><path d="M1.500 12.500L6.500 1l5 11.500M3.500 9h6.500" stroke={K} strokeWidth="1.300" /><path d="M12 3.500l2-2 2 2" stroke={B} strokeWidth="1.200" /></> },
  { t: "Insert Cells...", w: 66, i: <><path d="M.5 1.500h15v12H.5zM.5 5h15M.5 10h15M5 1.500v12M10 1.500v12" stroke={K} fill="#fff" /><path d="M6 5h9.500v5H6z" fill={LB} stroke="#1567b0" /><path d="M1 7.500h7M4 4.500l-3 3 3 3" stroke={B} strokeWidth="1.300" /></> },
  { t: "Insert Function...", w: 88, i: <path d="M1 14c3 1 3-4 4-8s2-6 4-5M3 6h5M8.500 7c3-1 2 6 5.500 5M14.500 7c-2-.5-4 6-6.500 5" stroke={K} /> },
  { t: "Insert Picture", w: 69, i: <><path d="M7 12.500H.5v-11h15V6" stroke={K} fill="#fff" /><path d="M1 8l3-3 3 3M12 3.500h1" stroke={K} /><path d="M8 7.500h7.500v5H8zM10 15h4M12 12.500V15" stroke={B} fill="#fff" /></> },
  { t: "Insert Sheet Columns", w: 112, i: <><path d="M.5 1v6H4M15.500 1v6H12" stroke={K} /><path d="M5.500 0h4v8h-4z" fill={LB} stroke="#1567b0" /><path d="M8 16v-6M5 12.500L8 10l3 2.500" stroke={B} strokeWidth="1.200" /></> },
  { t: "Insert Sheet Rows", w: 92, i: <><path d="M1 0h6v4M1 14h6v-4" stroke={K} /><path d="M0 5h9v4H0z" fill={LB} stroke="#1567b0" /><path d="M16 7h-6M13 4l-3 3 3 3" stroke={B} strokeWidth="1.200" /></> },
  { t: "Insert Table", w: 61, i: <><path d="M.5.5h14v14H.5zM.5 4.500h14M.5 8h14M.5 11.500h14M5.500 4.500v10M10 4.500v10" stroke={K} fill="#fff" /><path d="M3 1.500h3L4.500 3.500zM9 1.500h3l-1.500 2z" fill={B} /></> },
  { t: "Macros", w: 39, i: <path d="M3 .5v15L13.500 8z" stroke={G} strokeWidth="1.300" fill="#fff" /> },
  { t: "Merge & Center", w: 85, i: <><path d="M.5 0v15.500h15V0M8 0v3M8 13v3" stroke={K} /><path d="M.5 3.500h15v9H.5z" fill="#fff" stroke={B} /><path d="M3 8h10M5 6L3 8l2 2M11 6l2 2-2 2" stroke={B} strokeWidth="1.200" /></> },
];

function Marker({ m }: { m?: string }) {
  if (!m) return null;
  if (m === "edit")
    return <Svg w={16} h={16} c="ml-auto mr-[1px]"><rect x=".5" y=".5" width="15" height="15" rx="1.500" stroke={K} /><path d="M3 3h3M3 12h3M4.500 3v9" stroke={K} /><path d="M8 6.500h5L10.500 9.500z" fill={K} /></Svg>;
  return <Svg w={16} h={16} c="ml-auto mr-[1px]">{m === "split" && <path d="M1.500 0v16" stroke={K} />}<path d="M6 3.500l4 4-4 4z" fill="#222" /></Svg>;
}

function Btn({ t, tw, c = "", dim, arrow }: { t: string; tw: number; c?: string; dim?: boolean; arrow?: boolean }) {
  return (
    <div className={"flex shrink-0 items-center justify-center border " + (dim ? "border-[#d2d2d2] bg-[#e6e6e6] text-[#b1b1b1] " : "border-[#999] bg-[#e6e6e6] text-[#262626] ") + c}>
      <T t={t} w={tw} />
      {arrow && <Svg w={8} h={5} c="ml-[6px]"><path d="M0 .5h8L4 4.500z" fill="#222" /></Svg>}
    </div>
  );
}

function Plus({ minus }: { minus?: boolean }) {
  return <Svg w={9} h={9}><path d={minus ? "M.5.5h8v8h-8zM2.500 4.500h4" : "M.5.5h8v8h-8zM2.500 4.500h4M4.500 2.500v4"} stroke="#222" /></Svg>;
}

function Node({ t, w, off, minus, leaf, hot }: { t: string; w: number; off?: boolean; minus?: boolean; leaf?: boolean; hot?: boolean }) {
  return (
    <div className="flex h-[19px] items-center pl-[3px]">
      <div className="flex w-[13px]">{!leaf && <Plus minus={minus} />}</div>
      <div className={"flex h-[19px] flex-1 items-center " + (hot ? "bg-[#0078d7] text-white" : "")}>
        <div className={"ml-[1px] flex h-[13px] w-[13px] items-center justify-center border border-[#222] bg-white " + (hot ? "outline-1 outline-dotted outline-[#f0883a]" : "")}>
          {!off && <Svg w={11} h={9}><path d="M1 4.500L4 7.500 10 1.500" stroke="#444" strokeWidth="1.400" /></Svg>}
        </div>
        <T t={t} w={w} c="ml-[3px]" />
      </div>
    </div>
  );
}

function Customize() {
  return (
    <div className="h-full pl-[26px]">
      <div className="flex h-[46px] items-center">
        <Svg w={28} h={31}>
          <path d="M12 28H.7V.700H13l8 9v5M13 1v8.500h8" stroke={K} strokeWidth="1.300" fill="#fff" />
          <path d="M12 13H6v3H4v5h2v3h5M6 18h4" stroke={K} />
          <path d="M12.500 15.500h14.500v14H14l-1.500-1.500zM16 16v5h8v-5M17 29v-4h6v4" stroke="#a33fb0" fill="#fff" strokeWidth="1.200" />
        </Svg>
        <T t="Customize the Ribbon." w={131} c="ml-[6px] text-[13.500px] text-[#444]" />
      </div>
      <div className="flex">
        <div className="w-[244px]">
          <div className="flex h-[20px] items-center pl-[1px]"><T t="~Choose commands from:" w={134} /><Info c="ml-[2px]" /></div>
          <Combo t="Popular Commands" tw={107} w="w-[244px]" />
          <div className="relative mt-[21px] h-[483px] border border-[#ababab] pt-[1px]">
            {LIST.map((x) => (
              <div key={x.t} className="flex h-[16px] w-[226px] items-center">
                <div className="w-[23px] shrink-0"><Svg w={16} h={16}>{x.i}</Svg></div>
                <T t={x.t} w={x.w} />
                <Marker m={x.m} />
              </div>
            ))}
            <Scroll thumb="h-[247px]" c="top-[2px] h-[478px]" />
          </div>
        </div>
        <div className="ml-[9px] w-[80px] pt-[262px]">
          <Btn t="~Add >>" tw={39} c="h-[23px]" dim />
          <Btn t="<< ~Remove" tw={61} c="mt-[3px] h-[23px]" dim />
        </div>
        <div className="ml-[9px] w-[246px]">
          <div className="flex h-[20px] items-center pl-[1px]"><T t="Customize the Ri~bbon:" w={119} /><Info c="ml-[2px]" /></div>
          <Combo t="Main Tabs" tw={55} w="w-[246px]" />
          <div className="mt-[21px] h-[401px] border border-[#ababab]">
            <div className="h-[15px] bg-[#ebebeb] pl-[1px] font-bold leading-[16px] text-[#6a6a6a]"><T t="Main Tabs" w={55} /></div>
            <Node t="Background Removal" w={113} />
            <Node t="Home" w={33} />
            <Node t="Insert" w={29} />
            <Node t="Draw" w={27} off />
            <Node t="Page Layout" w={65} />
            <Node t="Formulas" w={49} />
            <Node t="Data" w={24} minus />
            <div className="-mb-[3px] mt-[2px]">
              {([["Get & Transform Data", 116], ["Queries & Connections", 123], ["Sort & Filter", 63], ["Data Tools", 56], ["Forecast", 44], ["Outline", 39]] as [string, number][]).map(([t, w]) => (
                <div key={t} className="flex h-[16px] items-center pl-[37px]"><Plus /><T t={t} w={w} c="ml-[5px]" /></div>
              ))}
            </div>
            <Node t="Review" w={37} />
            <Node t="View" w={25} />
            <Node t="Developer" w={53} hot />
            <Node t="Add-ins" w={42} leaf />
            <Node t="Help" w={25} />
          </div>
          <div className="mt-[3px] flex h-[23px] gap-[9px]">
            <Btn t="Ne~w Tab" tw={47} c="w-[75px]" />
            <Btn t="~New Group" tw={60} c="w-[78px]" />
            <Btn t="Rena~me..." tw={52} c="w-[75px]" />
          </div>
          <div className="mt-[5px] flex h-[21px] items-center">
            <div className="w-[98px] shrink-0 pl-[1px]"><T t="Customizations:" w={84} /></div>
            <Btn t="R~eset" tw={28} c="h-[21px] w-[71px]" arrow />
            <Info c="ml-[3px]" />
          </div>
          <div className="mt-[7px] flex h-[21px] items-center pl-[98px]">
            <Btn t="Im~port/Export" tw={74} c="h-[21px] w-[96px]" arrow />
            <Info c="ml-[3px]" />
          </div>
        </div>
        <div className="ml-[9px] w-[30px] pt-[262px]">
          <div className="flex h-[23px] items-center justify-center border border-[#999] bg-[#e6e6e6]"><Svg w={8} h={5}><path d="M0 4.500h8L4 .5z" fill="#222" /></Svg></div>
          <div className="mt-[3px] flex h-[23px] items-center justify-center border border-[#999] bg-[#e6e6e6]"><Svg w={8} h={5}><path d="M0 .5h8L4 4.500z" fill="#222" /></Svg></div>
        </div>
      </div>
    </div>
  );
}

/* ---------- walkthrough ---------- */

function Note({ t, w, pos }: { t: string; w?: number; pos: string }) {
  return (
    <div className={"absolute text-[21px] leading-[30px] text-[#ed1c24] " + pos}>
      <T t={t} w={w} />
    </div>
  );
}

function Mark({ pos }: { pos: string }) {
  return <div className={"absolute border-[5.300px] border-[#ed1c24] " + pos} />;
}

export default function App() {
  return (
    <div className="h-[1081px] w-full overflow-hidden bg-white">
      <div className="relative flex h-[1144px] w-[4336px] bg-white pl-[136px] font-['Open_Sans','Noto_Sans',sans-serif] text-[11.500px] leading-[16px] [zoom:0.9446]">
        <Backstage />

        <section className="relative ml-[132px] mt-[166px] h-[820px] w-[1459px] shrink-0 overflow-hidden">
          <Workbook />
          <Dialog sel={["General", "Customize Ribbon"]} pos="left-[537px] top-[106px]">
            <General />
          </Dialog>
        </section>

        <section className="relative ml-[174px] mt-[204px] h-[713px] w-[919px] shrink-0 overflow-hidden">
          <div className="-ml-[487px] -mt-[98px] w-[1459px]">
            <Workbook />
          </div>
          <Dialog sel={["Customize Ribbon"]} pos="left-[50px] top-[8px]" hotOk>
            <Customize />
          </Dialog>
        </section>

        <Note t={'Now please left-side Icon "Option" of the red-marked area !'} w={558} pos="left-[333px] top-[859px]" />
        <Note t={'Now please click the Icon "Customize Ribbon" of the red-marked area !'} w={664} pos="left-[1705px] top-[136px]" />
        <Note t="1" pos="left-[3213px] top-[161px]" />
        <Note t={'Now please click the checkbix "Develpoment" of the red-marked area !'} w={658} pos="left-[3239px] top-[161px]" />
        <Note t={'2. Finally click the Button "OK" !'} w={290} pos="left-[3265px] top-[895px]" />

        <Mark pos="left-[150px] top-[937px] h-[41px] w-[103px]" />
        <Mark pos="left-[2107px] top-[525px] h-[39px] w-[147px]" />
        <Mark pos="left-[3773px] top-[635px] h-[30px] w-[102px]" />
        <Mark pos="left-[3888px] top-[847px] h-[44px] w-[105px]" />

        <Svg w={84} h={52} c="absolute left-[1451px] top-[657px]">
          <path d="M2.500 14H41.500V3.500L80 26 41.500 48.500V37.700H2.500z" stroke="#ed1c24" strokeWidth="5" strokeLinejoin="round" />
        </Svg>
        <Svg w={94} h={104} c="absolute left-[3060px] top-[566px]">
          <path d="M3.500 27.500H46.500V4L89.500 51.500 46.500 99V75.300H3.500z" stroke="#ed1c24" strokeWidth="5" strokeLinejoin="round" />
        </Svg>
      </div>
    </div>
  );
}
